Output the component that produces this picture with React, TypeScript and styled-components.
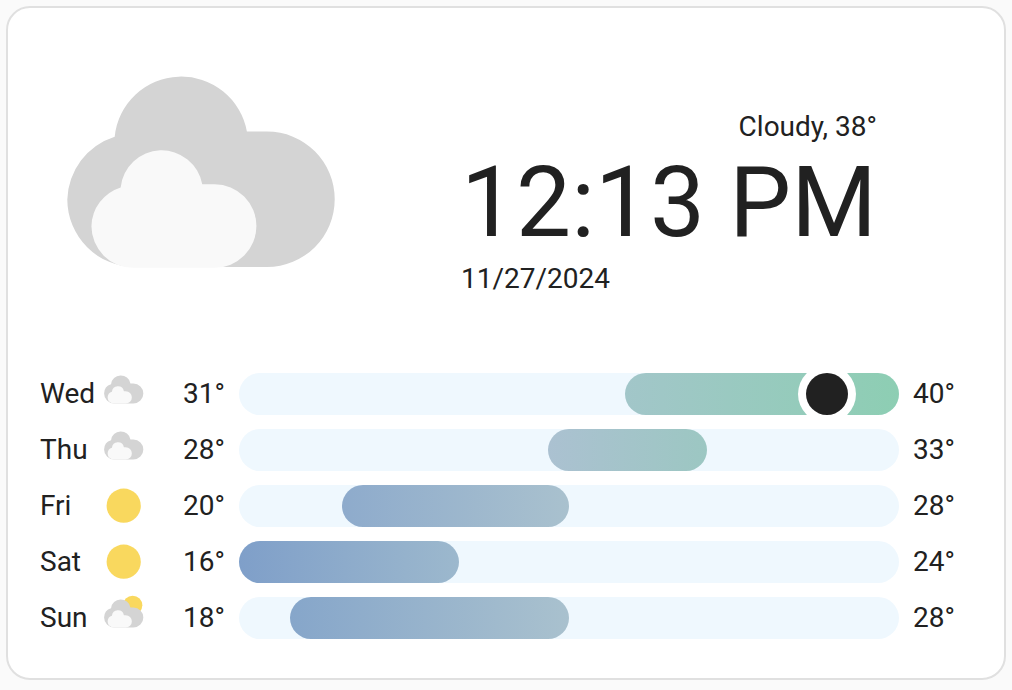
import React from "react";
import styled, { createGlobalStyle } from "styled-components";

const GlobalStyle = createGlobalStyle`
  * { box-sizing: border-box; }
  body {
    margin: 0;
    background: #fafafa;
    color: #212121;
    font-family: Roboto, "Liberation Sans", sans-serif;
    font-size: 28px;
    line-height: 42px;
  }
`;

const Page = styled.main`
  padding: 6px;
`;

const Card = styled.section`
  width: 1000px;
  height: 674px;
  padding: 32px;
  background: #fff;
  border: 2px solid #e0e0e0;
  border-radius: 24px;
`;

const Today = styled.header`
  display: flex;
  height: 333px;
`;

const TodayIcon = styled.div`
  display: flex;
  padding: 20px 0 0 20px;
  width: 421px;
`;

const TodayText = styled.div`
  width: 416px;
  padding-top: 66px;
`;

const Condition = styled.div`
  text-align: right;
`;

const Clock = styled.div`
  font-size: 98px;
  line-height: 98px;
  padding-top: 6px;
  white-space: nowrap;
`;

const DateLine = styled.div`
  padding-top: 6px;
`;

const Forecast = styled.div`
  display: flex;
  flex-direction: column;
  gap: 14px;
`;

const Row = styled.div`
  display: grid;
  grid-template-columns: 62px 81px 56px 660px 56px;
  height: 42px;
`;

const DayIcon = styled.div`
  display: flex;
  padding-left: 1px;
`;

const High = styled.span`
  padding-left: 14px;
`;

const Track = styled.div`
  position: relative;
  height: 42px;
  border-radius: 21px;
  background: #eff8fe;
`;

const Range = styled.div<{ $from: string; $to: string }>`
  height: 42px;
  border-radius: 21px;
  background: linear-gradient(to right, ${(p) => p.$from}, ${(p) => p.$to});
`;

const Now = styled.div`
  position: absolute;
  top: 0;
  width: 42px;
  height: 42px;
  border-radius: 50%;
  background: #212121;
  box-shadow: 0 0 0 8px #fff;
  clip-path: inset(0 -8px);
`;

const Drawing = styled.svg<{ $size: number }>`
  width: ${(p) => p.$size}px;
  height: ${(p) => p.$size}px;
  overflow: visible;
  flex: none;
`;

type Sky = "cloudy" | "sunny" | "partly";

const CLOUD =
  "M56.7 76.7A66.8 66.8 0 0 1 188.9 71.5H209A67.7 67.75 0 0 1 209 207H77A67.7 67.7 0 0 1 9.3 139.5A67.7 67.7 0 0 1 56.7 76.7Z";

function WeatherIcon({ sky, size }: { sky: Sky; size: number }) {
  return (
    <Drawing $size={size} viewBox="2 0 286 286">
      {sky === "sunny" && <circle cx="143" cy="141" r="116.5" fill="#f9d85e" />}
      {sky === "partly" && <circle cx="204" cy="57" r="66" fill="#f9d85e" />}
      {sky !== "sunny" && (
        <>
          <path d={CLOUD} fill="#d4d4d4" />
          <path d={CLOUD} fill="#f9f9f9" transform="translate(27.7 80.1) scale(.617)" />
        </>
      )}
    </Drawing>
  );
}

interface Day {
  name: string;
  sky: Sky;
  low: number;
  high: number;
  start: number;
  width: number;
  from: string;
  to: string;
  now?: number;
}

const days: Day[] = [
  { name: "Wed", sky: "cloudy", low: 31, high: 40, start: 386, width: 274, from: "#a2c6c9", to: "#8dceb3", now: 567 },
  { name: "Thu", sky: "cloudy", low: 28, high: 33, start: 309, width: 159, from: "#abc1d1", to: "#9cc7c2" },
  { name: "Fri", sky: "sunny", low: 20, high: 28, start: 103, width: 227, from: "#8eabcc", to: "#a9c1ce" },
  { name: "Sat", sky: "sunny", low: 16, high: 24, start: 0, width: 220, from: "#7f9fc9", to: "#9cb8cd" },
  { name: "Sun", sky: "partly", low: 18, high: 28, start: 51, width: 279, from: "#86a6ca", to: "#a9c1ce" },
];

export default function App() {
  return (
    <Page>
      <GlobalStyle />
      <Card>
        <Today>
          <TodayIcon>
            <WeatherIcon sky="cloudy" size={286} />
          </TodayIcon>
          <TodayText>
            <Condition>Cloudy, 38°</Condition>
            <Clock>12:13 PM</Clock>
            <DateLine>11/27/2024</DateLine>
          </TodayText>
        </Today>
        <Forecast>
          {days.map((d) => (
            <Row key={d.name}>
              <span>{d.name}</span>
              <DayIcon>
                <WeatherIcon sky={d.sky} size={42} />
              </DayIcon>
              <span>{d.low}°</span>
              <Track>
                <Range $from={d.from} $to={d.to} style={{ marginLeft: d.start, width: d.width }} />
                {d.now !== undefined && <Now style={{ left: d.now }} />}
              </Track>
              <High>{d.high}°</High>
            </Row>
          ))}
        </Forecast>
      </Card>
    </Page>
  );
}
